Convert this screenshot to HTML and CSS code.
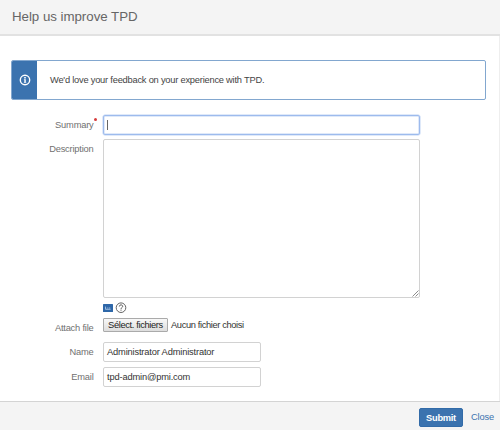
FILE: index.html
```html
<!DOCTYPE html>
<html lang="en">
<head>
<meta charset="utf-8">
<title>Help us improve TPD</title>
<link rel="stylesheet" href="styles.css">
</head>
<body>
<form class="dialog">
  <header class="dialog-header"><h1>Help us improve TPD</h1></header>
  <main class="dialog-body">
    <div class="message">
      <div class="message-icon">
        <svg width="12" height="12" viewBox="0 0 12 12"><circle cx="6" cy="6" r="4.7" fill="none" stroke="#fff" stroke-width="1.4"/><path d="M4.9 5.2h1.9v2.7h.4v.9H4.9v-.9h.4V6.1h-.4zM5.2 2.9h1.6v1.6H5.2z" fill="#fff"/></svg>
      </div>
      <p class="message-text">We'd love your feedback on your experience with TPD.</p>
    </div>
    <div class="row summary">
      <div class="label">Summary<span class="required"></span></div>
      <div class="field focused"><span class="caret"></span></div>
    </div>
    <div class="row description">
      <div class="label">Description</div>
      <div class="field area">
        <svg class="grip" width="7" height="7" viewBox="0 0 7 7"><path d="M.5 6.5l6-6M3.5 6.5l3-3" stroke="#8c8c8c" stroke-width="1" fill="none"/></svg>
      </div>
    </div>
    <div class="tools">
      <svg width="10" height="8" viewBox="0 0 10 8"><rect width="10" height="8" rx=".5" fill="#2e67a8"/><path d="M2.5 2.6v2.6M3.8 4h1M5.6 4h1.7M2.4 5.3h5.2" stroke="#b9d2ee" stroke-width=".8" fill="none"/></svg>
      <svg width="12" height="12" viewBox="0 0 12 12"><circle cx="6" cy="5.7" r="4.8" fill="none" stroke="#555" stroke-width=".9"/><path d="M4.3 4.5C4.3 2.3 7.7 2.4 7.7 4.4 7.7 5.6 6 5.6 6 6.9M6 7.6v1.1" fill="none" stroke="#555" stroke-width="1"/></svg>
    </div>
    <div class="row attach">
      <div class="label">Attach file</div>
      <button type="button" class="file-button">Sélect. fichiers</button>
      <span class="file-name">Aucun fichier choisi</span>
    </div>
    <div class="row name">
      <div class="label">Name</div>
      <div class="field short"><span>Administrator Administrator</span></div>
    </div>
    <div class="row email">
      <div class="label">Email</div>
      <div class="field short"><span class="address">tpd-admin@pmi.com</span></div>
    </div>
  </main>
  <footer class="dialog-footer">
    <button type="button" class="submit">Submit</button>
    <a class="close">Close</a>
  </footer>
</form>
</body>
</html>
```
FILE: styles.css
```css
* { box-sizing: border-box; }
body { margin: 0; font: 9.3px/12px "Liberation Sans", Arial, sans-serif; letter-spacing: -.22px; color: #333; background: #fff; }
h1, p { margin: 0; }
svg { display: block; flex: none; }
.dialog { width: 500px; height: 430px; display: flex; flex-direction: column; }
.dialog-header { height: 36px; background: #f4f4f4; border-bottom: 2px solid #e2e2e2; padding: 8px 12px 0; }
h1 { font-size: 13.3px; line-height: 17px; font-weight: 400; letter-spacing: -.03px; color: #666; }
.dialog-body { flex: 1; padding: 24px 13px 0 11px; border-right: 1px solid #eee; }
.message { height: 40px; display: flex; border: 1px solid #82a7cf; border-radius: 2px; overflow: hidden; margin-bottom: 15px; }
.message-icon { width: 25px; background: #3b73af; display: flex; align-items: center; justify-content: center; }
.message-text { padding: 13px 0 0 13px; white-space: nowrap; color: #444; }
.row { display: flex; align-items: flex-start; white-space: nowrap; }
.label { width: 83px; margin-right: 9px; padding-top: 4px; padding-right: .5px; text-align: right; letter-spacing: -.2px; color: #707070; position: relative; }
.required { position: absolute; left: 83px; top: 3px; width: 3px; height: 3px; border-radius: 50%; background: #d63b3b; }
.field { width: 317px; height: 20px; border: 1px solid #d2d2d2; border-radius: 2px; padding: 3px; display: flex; position: relative; letter-spacing: -.16px; }
.focused { border-color: #9dbbed; box-shadow: 0 0 0 .5px #c0d3f4, inset 0 0 0 .5px #c0d3f4; }
.caret { width: 1px; height: 10px; margin-top: 1px; background: #666; }
.description { margin-top: 4px; }
.area { height: 159px; }
.grip { position: absolute; right: 0; bottom: 0; }
.tools { display: flex; gap: 2px; align-items: center; height: 12px; margin: 4px 0 0 92px; }
.attach { margin-top: 4px; height: 15px; }
.file-button { width: 65px; height: 14px; padding: 0; margin: 0; border: 1px solid #aaa; border-radius: 1px; background: linear-gradient(#f8f8f8, #ddd); font: inherit; letter-spacing: -.35px; line-height: 12px; color: #222; }
.file-name { margin: 1px 0 0 3px; letter-spacing: -.37px; }
.name { margin-top: 9px; }
.email { margin-top: 5px; }
.short { width: 158px; }
.dialog-footer { height: 29px; display: flex; align-items: flex-start; padding: 6px 6px 0 0; justify-content: flex-end; background: #f4f4f4; border-top: 1px solid #d4d4d4; }
.submit { width: 44px; height: 19px; margin: 0 8px 0 0; padding: 0; border: 1px solid #326ba8; border-radius: 2px; background: #3b73af; color: #fff; font: bold 9.3px/12px "Liberation Sans", Arial, sans-serif; letter-spacing: -.3px; }
.close { color: #3b73af; line-height: 19px; letter-spacing: -.15px; }
```
